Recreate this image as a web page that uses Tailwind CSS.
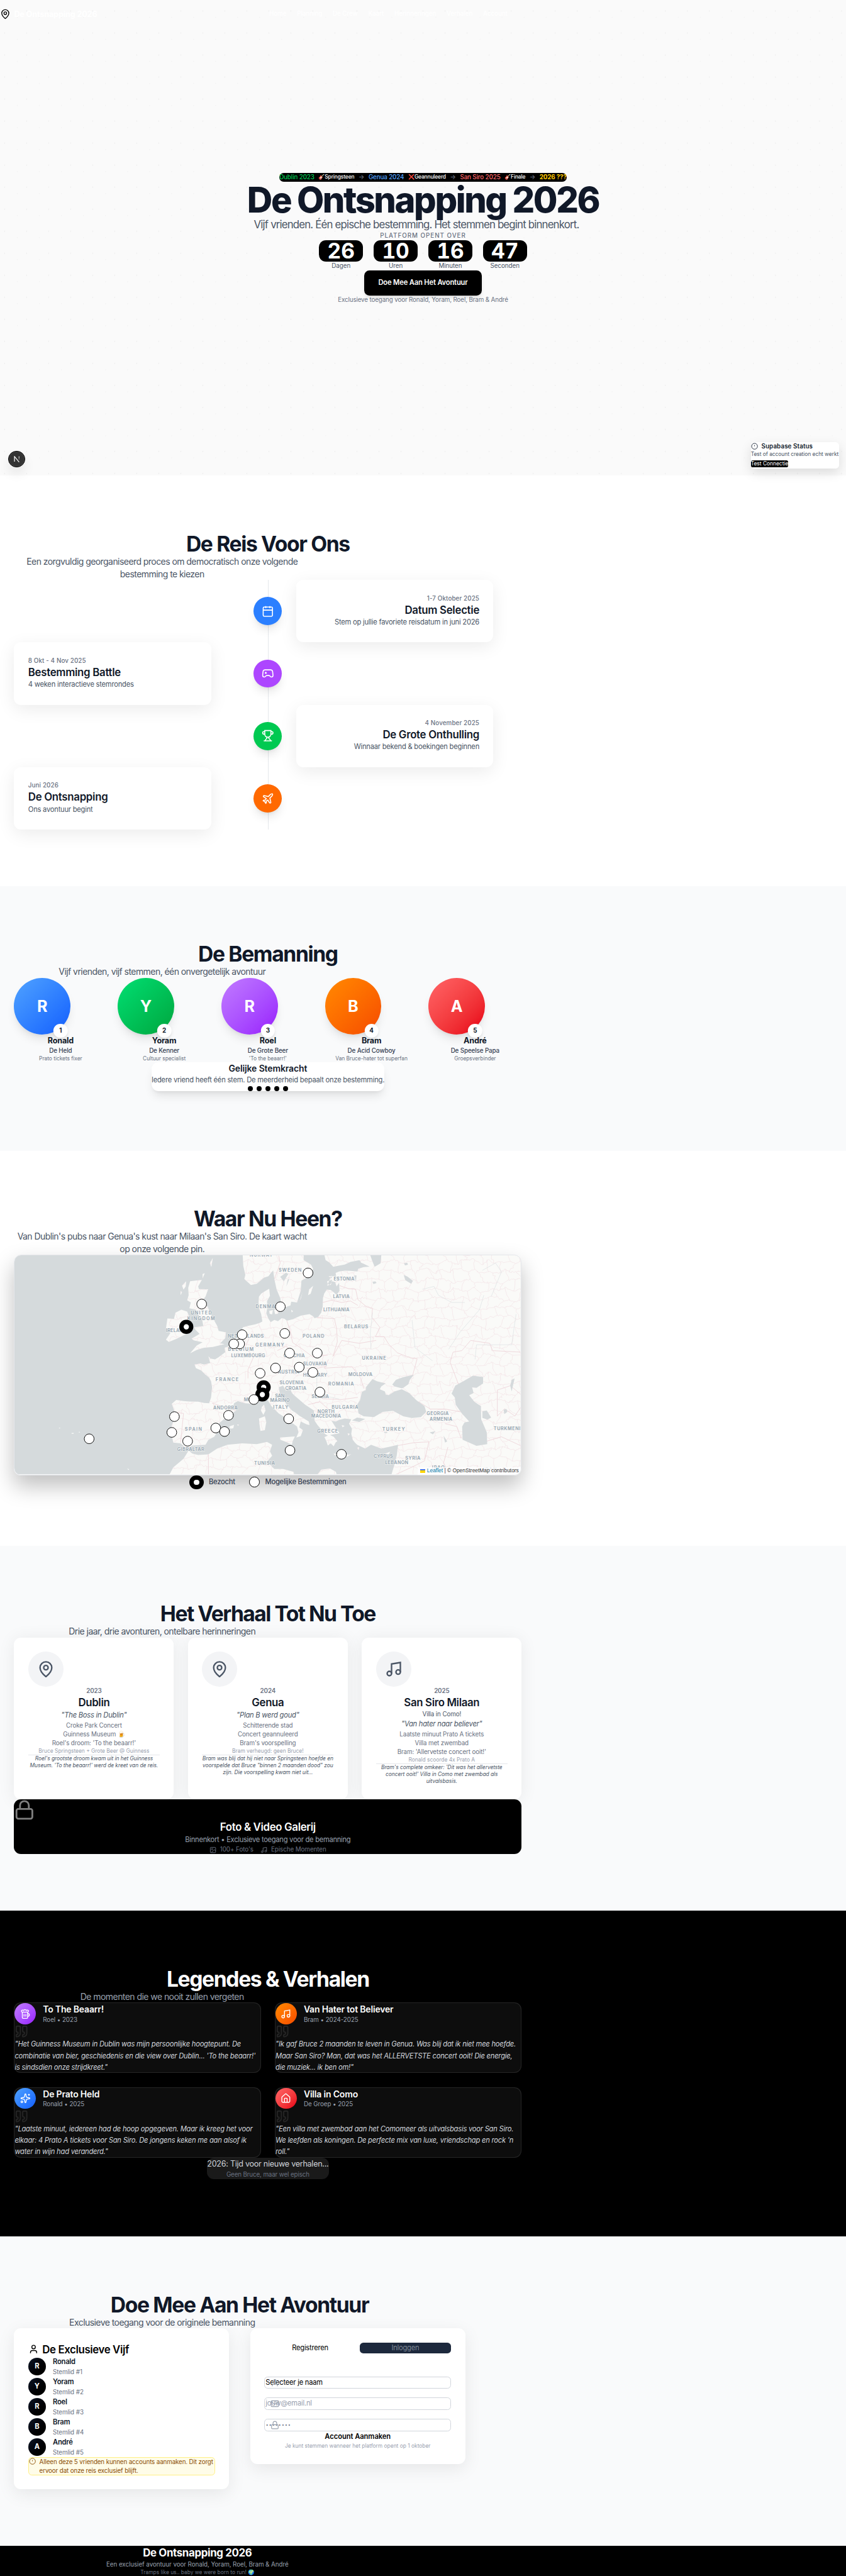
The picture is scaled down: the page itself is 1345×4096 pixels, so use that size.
<!DOCTYPE html>
<html lang="nl" class="text-[11.207px]">
<head>
<meta charset="utf-8">
<title>De Ontsnapping 2026</title>
<script src="https://cdn.jsdelivr.net/npm/@tailwindcss/browser@4"></script>
</head>
<body class="overflow-x-hidden bg-white font-[Inter,sans-serif] text-base leading-[1.6] tracking-[-0.021em] text-gray-900 antialiased">
<svg class="hidden">
  <defs>
    <symbol id="pin" viewBox="0 0 24 24"><path d="M20 10c0 4.993-5.539 10.193-7.399 11.799a1 1 0 0 1-1.202 0C9.539 20.193 4 14.993 4 10a8 8 0 0 1 16 0"/><circle cx="12" cy="10" r="3"/></symbol>
    <symbol id="music" viewBox="0 0 24 24"><path d="M9 18V5l12-2v13"/><circle cx="6" cy="18" r="3"/><circle cx="18" cy="16" r="3"/></symbol>
    <symbol id="alert" viewBox="0 0 24 24"><circle cx="12" cy="12" r="10"/><path d="M12 8v4M12 16h.01"/></symbol>
    <symbol id="lock" viewBox="0 0 24 24"><rect width="18" height="11" x="3" y="11" rx="2"/><path d="M7 11V7a5 5 0 0 1 10 0v4"/></symbol>
    <symbol id="user" viewBox="0 0 24 24"><path d="M19 21v-2a4 4 0 0 0-4-4H9a4 4 0 0 0-4 4v2"/><circle cx="12" cy="7" r="4"/></symbol>
    <symbol id="quote" viewBox="0 0 24 24"><path d="M16 3a2 2 0 0 0-2 2v6a2 2 0 0 0 2 2 1 1 0 0 1 1 1v1a2 2 0 0 1-2 2 1 1 0 0 0-1 1v2a1 1 0 0 0 1 1 6 6 0 0 0 6-6V5a2 2 0 0 0-2-2zM5 3a2 2 0 0 0-2 2v6a2 2 0 0 0 2 2 1 1 0 0 1 1 1v1a2 2 0 0 1-2 2 1 1 0 0 0-1 1v2a1 1 0 0 0 1 1 6 6 0 0 0 6-6V5a2 2 0 0 0-2-2z"/></symbol>
  </defs>
</svg>

<!-- Hero -->
<section class="relative h-270 bg-[#fafafa] bg-[radial-gradient(circle_at_20%_50%,#ebebeb_0.0625rem,transparent_0.0625rem),radial-gradient(circle_at_80%_80%,#ebebeb_0.0625rem,transparent_0.0625rem)] bg-size-[3.125rem_3.125rem]">
  <nav class="absolute inset-x-0 top-0 flex h-16 w-288 items-center justify-between text-white">
    <div class="flex items-center gap-2"><svg class="size-6 fill-none stroke-black stroke-2"><use href="#pin"/></svg><span class="text-lg font-bold tracking-[-0.01em]">De Ontsnapping 2026</span></div>
    <div class="flex gap-6 text-sm font-medium tracking-[-0.006em]"><span>Home</span><span>Planning</span><span>De Crew</span><span>Kaart</span><span>Herinneringen</span><span>Verhalen</span><span>Account</span></div>
  </nav>
  <div class="flex flex-col items-center pt-98">
    <div class="mb-0.5 flex h-5 w-163 items-center justify-between rounded-full bg-black text-sm font-medium tracking-[-0.013em] whitespace-nowrap text-white">
      <span class="text-green-500">Dublin 2023</span><span class="text-xs">🎸Springsteen</span><span class="text-gray-500">→</span>
      <span class="text-blue-400">Genua 2024</span><span class="text-xs">❌Geannuleerd</span><span class="text-gray-500">→</span>
      <span class="text-red-400">San Siro 2025</span><span class="text-xs">🎸Finale</span><span class="text-gray-500">→</span>
      <span class="font-bold text-yellow-400">2026 ???</span>
    </div>
    <h1 class="text-[5rem] leading-none font-extrabold tracking-[-0.043em] whitespace-nowrap">De Ontsnapping 2026</h1>
    <p class="-ml-7.5 text-2xl tracking-[-0.049em] text-gray-600">Vijf vrienden. Één epische bestemming. Het stemmen begint binnenkort.</p>
    <p class="text-sm font-medium tracking-[0.1em] text-gray-500">PLATFORM OPENT OVER</p>
    <div class="flex gap-6 text-center text-sm tracking-[-0.006em] text-gray-600">
      <div class="w-25"><div class="rounded-2xl bg-black text-5xl leading-none font-bold text-white tabular-nums">26</div><span>Dagen</span></div>
      <div class="w-25"><div class="rounded-2xl bg-black text-5xl leading-none font-bold text-white tabular-nums">10</div><span>Uren</span></div>
      <div class="w-25"><div class="rounded-2xl bg-black text-5xl leading-none font-bold text-white tabular-nums">16</div><span>Minuten</span></div>
      <div class="w-25"><div class="rounded-2xl bg-black text-5xl leading-none font-bold text-white tabular-nums">47</div><span>Seconden</span></div>
    </div>
    <button class="w-67 rounded-xl bg-black py-4 font-semibold tracking-[-0.015em] text-white shadow-md"><span>Doe Mee Aan Het Avontuur</span></button>
    <p class="text-sm tracking-[-0.013em] text-gray-500">Exclusieve toegang voor Ronald, Yoram, Roel, Bram &amp; André</p>
  </div>
  <div class="absolute bottom-4.75 left-4.75 z-10 grid size-9.5 place-items-center rounded-full border border-black bg-[#333] text-white shadow-[0_0.9rem_1.6rem_rgba(0,0,0,.08)] ring-1 ring-white/10 ring-inset">
    <svg class="size-3.5 fill-none" viewBox="0 0 14 14"><defs><linearGradient id="nf" x1="0" x2="0" y1="0" y2="1"><stop stop-color="#fff"/><stop offset="1" stop-color="#fff" stop-opacity="0"/></linearGradient></defs><path d="M1.500 13V1.200L12 14" stroke="#fff" stroke-width="1.700"/><rect x="11" y="1" width="1.700" height="9" fill="url(#nf)"/></svg>
  </div>
  <div class="absolute right-4 bottom-4 w-50 rounded-lg bg-white tracking-normal whitespace-nowrap shadow-[0_0.6rem_1.6rem_rgba(0,0,0,.12)]">
    <div class="flex items-center gap-2"><svg class="size-4 fill-none stroke-gray-800 stroke-2"><use href="#alert"/></svg><span class="text-sm font-semibold tracking-[0.01em]">Supabase Status</span></div>
    <p class="text-xs tracking-[-0.004em] text-gray-600">Test of account creation echt werkt</p>
    <div class="flex h-6.25 items-center"><button class="mt-0.5 rounded bg-black text-xs text-white">Test Connectie</button></div>
  </div>
</section>

<!-- Planning -->
<section class="h-[58.2rem] w-304 px-8 pt-32">
  <h2 class="text-center text-5xl leading-[1.1] font-bold tracking-[-0.04em]">De Reis Voor Ons</h2>
  <p class="w-168 text-center text-xl tracking-[-0.04em] whitespace-nowrap text-gray-600">Een zorgvuldig georganiseerd proces om democratisch onze volgende<br>bestemming te kiezen</p>
  <div class="relative">
    <div class="absolute inset-y-0 left-1/2 w-px bg-gray-200"></div>
    <div class="grid h-[8.85rem] grid-cols-[28rem_12rem_28rem] items-center">
      <div></div><div class="relative mr-8 grid size-16 place-items-center justify-self-end rounded-full bg-blue-500 shadow-lg"><svg class="size-7 fill-none stroke-white stroke-2" viewBox="0 0 24 24"><path d="M8 2v4M16 2v4M3 10h18"/><rect width="18" height="18" x="3" y="4" rx="2"/></svg></div>
      <div class="h-full rounded-2xl bg-white p-8 text-right shadow-[0_0.625rem_2.5rem_rgba(0,0,0,.08)]"><p class="text-sm font-medium tracking-[0.012em] text-gray-500">1-7 Oktober 2025</p><h3 class="text-2xl font-semibold tracking-[-0.017em]">Datum Selectie</h3><p class="text-gray-600">Stem op jullie favoriete reisdatum in juni 2026</p></div>
    </div>
    <div class="grid h-[8.85rem] grid-cols-[28rem_12rem_28rem] items-center">
      <div class="h-full rounded-2xl bg-white p-8 shadow-[0_0.625rem_2.5rem_rgba(0,0,0,.08)]"><p class="text-sm font-medium tracking-[0.012em] text-gray-500">8 Okt - 4 Nov 2025</p><h3 class="text-2xl font-semibold tracking-[-0.017em]">Bestemming Battle</h3><p class="text-gray-600">4 weken interactieve stemrondes</p></div>
      <div class="relative mr-8 grid size-16 place-items-center justify-self-end rounded-full bg-purple-500 shadow-lg"><svg class="size-7 fill-none stroke-white stroke-2" viewBox="0 0 24 24"><path d="M6 11h4M8 9v4M15 12h.01M18 10h.01"/><path d="M17.32 5H6.68a4 4 0 0 0-3.978 3.59c-.006.052-.01.101-.017.152C2.604 9.416 2 14.456 2 16a3 3 0 0 0 3 3c1 0 1.5-.5 2-1l1.414-1.414A2 2 0 0 1 9.828 16h4.344a2 2 0 0 1 1.414.586L17 18c.5.5 1 1 2 1a3 3 0 0 0 3-3c0-1.545-.604-6.584-.685-7.258-.007-.05-.011-.1-.017-.151A4 4 0 0 0 17.32 5z"/></svg></div>
    </div>
    <div class="grid h-[8.85rem] grid-cols-[28rem_12rem_28rem] items-center">
      <div></div><div class="relative mr-8 grid size-16 place-items-center justify-self-end rounded-full bg-green-500 shadow-lg"><svg class="size-7 fill-none stroke-white stroke-2" viewBox="0 0 24 24"><path d="M6 9H4.5a2.5 2.5 0 0 1 0-5H6M18 9h1.5a2.5 2.5 0 0 0 0-5H18M4 22h16M10 14.66V17c0 .55-.47.98-.97 1.21C7.85 18.75 7 20.24 7 22M14 14.66V17c0 .55.47.98.97 1.21C16.15 18.75 17 20.24 17 22M18 2H6v7a6 6 0 0 0 12 0V2Z"/></svg></div>
      <div class="h-full rounded-2xl bg-white p-8 text-right shadow-[0_0.625rem_2.5rem_rgba(0,0,0,.08)]"><p class="text-sm font-medium tracking-[0.012em] text-gray-500">4 November 2025</p><h3 class="text-2xl font-semibold tracking-[-0.017em]">De Grote Onthulling</h3><p class="text-gray-600">Winnaar bekend &amp; boekingen beginnen</p></div>
    </div>
    <div class="grid h-[8.85rem] grid-cols-[28rem_12rem_28rem] items-center">
      <div class="h-full rounded-2xl bg-white p-8 shadow-[0_0.625rem_2.5rem_rgba(0,0,0,.08)]"><p class="text-sm font-medium tracking-[0.012em] text-gray-500">Juni 2026</p><h3 class="text-2xl font-semibold tracking-[-0.017em]">De Ontsnapping</h3><p class="text-gray-600">Ons avontuur begint</p></div>
      <div class="relative mr-8 grid size-16 place-items-center justify-self-end rounded-full bg-orange-500 shadow-lg"><svg class="size-7 fill-none stroke-white stroke-2" viewBox="0 0 24 24"><path d="M17.8 19.2 16 11l3.5-3.5C21 6 21.5 4 21 3c-1-.5-3 0-4.5 1.5L13 8 4.8 6.2c-.5-.1-.9.1-1.1.5l-.3.5c-.2.5-.1 1 .3 1.3L9 12l-2 3H4l-1 1 3 2 2 3 1-1v-3l3-2 3.5 5.3c.3.4.8.5 1.3.3l.5-.2c.4-.3.6-.7.5-1.2z"/></svg></div>
    </div>
  </div>
</section>

<!-- De Crew -->
<section class="h-[37.55rem] bg-gray-50">
  <div class="w-304 px-8 pt-32">
    <h2 class="text-center text-5xl leading-[1.1] font-bold tracking-[-0.04em]">De Bemanning</h2>
    <p class="w-168 text-center text-xl tracking-[-0.04em] text-gray-600">Vijf vrienden, vijf stemmen, één onvergetelijk avontuur</p>
    <div class="grid grid-cols-5 gap-6 text-center text-xs tracking-[-0.004em] text-gray-500">
      <div class="relative"><div class="grid size-32 place-items-center rounded-full bg-linear-to-br from-blue-400 to-blue-600 text-4xl font-bold text-white shadow-lg">R</div><b class="absolute top-26 left-1/2 grid size-8 -translate-x-1/2 place-items-center rounded-full bg-white text-sm font-bold text-gray-900 shadow-md">1</b><h3 class="relative text-lg font-bold tracking-[-0.013em] text-gray-900">Ronald</h3><p class="text-sm font-medium tracking-[-0.011em] text-gray-700">De Held</p><p>Prato tickets fixer</p></div>
      <div class="relative"><div class="grid size-32 place-items-center rounded-full bg-linear-to-br from-green-400 to-green-600 text-4xl font-bold text-white shadow-lg">Y</div><b class="absolute top-26 left-1/2 grid size-8 -translate-x-1/2 place-items-center rounded-full bg-white text-sm font-bold text-gray-900 shadow-md">2</b><h3 class="relative text-lg font-bold tracking-[-0.013em] text-gray-900">Yoram</h3><p class="text-sm font-medium tracking-[-0.011em] text-gray-700">De Kenner</p><p>Cultuur specialist</p></div>
      <div class="relative"><div class="grid size-32 place-items-center rounded-full bg-linear-to-br from-purple-400 to-purple-600 text-4xl font-bold text-white shadow-lg">R</div><b class="absolute top-26 left-1/2 grid size-8 -translate-x-1/2 place-items-center rounded-full bg-white text-sm font-bold text-gray-900 shadow-md">3</b><h3 class="relative text-lg font-bold tracking-[-0.013em] text-gray-900">Roel</h3><p class="text-sm font-medium tracking-[-0.011em] text-gray-700">De Grote Beer</p><p>'To the beaarr!'</p></div>
      <div class="relative"><div class="grid size-32 place-items-center rounded-full bg-linear-to-br from-orange-400 to-orange-600 text-4xl font-bold text-white shadow-lg">B</div><b class="absolute top-26 left-1/2 grid size-8 -translate-x-1/2 place-items-center rounded-full bg-white text-sm font-bold text-gray-900 shadow-md">4</b><h3 class="relative text-lg font-bold tracking-[-0.013em] text-gray-900">Bram</h3><p class="text-sm font-medium tracking-[-0.011em] text-gray-700">De Acid Cowboy</p><p>Van Bruce-hater tot superfan</p></div>
      <div class="relative"><div class="grid size-32 place-items-center rounded-full bg-linear-to-br from-red-400 to-red-600 text-4xl font-bold text-white shadow-lg">A</div><b class="absolute top-26 left-1/2 grid size-8 -translate-x-1/2 place-items-center rounded-full bg-white text-sm font-bold text-gray-900 shadow-md">5</b><h3 class="relative text-lg font-bold tracking-[-0.013em] text-gray-900">André</h3><p class="text-sm font-medium tracking-[-0.011em] text-gray-700">De Speelse Papa</p><p>Groepsverbinder</p></div>
    </div>
    <div class="mx-auto w-132 rounded-2xl bg-white text-center shadow-lg">
      <h3 class="text-xl font-semibold tracking-[-0.009em]">Gelijke Stemkracht</h3>
      <p class="whitespace-nowrap text-gray-600">Iedere vriend heeft één stem. De meerderheid bepaalt onze bestemming.</p>
      <div class="flex justify-center gap-2"><i class="size-3 rounded-full bg-black"></i><i class="size-3 rounded-full bg-black"></i><i class="size-3 rounded-full bg-black"></i><i class="size-3 rounded-full bg-black"></i><i class="size-3 rounded-full bg-black"></i></div>
    </div>
  </div>
</section>

<!-- Kaart -->
<section class="h-[56.05rem] w-304 px-8 pt-32">
  <h2 class="text-center text-5xl leading-[1.1] font-bold tracking-[-0.04em]">Waar Nu Heen?</h2>
  <p class="w-168 text-center text-xl tracking-[-0.04em] whitespace-nowrap text-gray-600">Van Dublin's pubs naar Genua's kust naar Milaan's San Siro. De kaart wacht<br>op onze volgende pin.</p>
  <div class="relative h-125 overflow-hidden rounded-2xl border border-gray-200 shadow-[0_1.5rem_3rem_rgba(0,0,0,.25)]">
    <svg class="block size-full" viewBox="-954 27 3456 1500" preserveAspectRatio="none">
      <defs><path id="land" d="M1162 27 1170 60 1195 75 1222 106 1260 98 1300 90 1340 72 1402 60 1412 78 1430 85 1470 105 1430 108 1392 120 1388 138 1340 134 1300 132 1262 138 1238 148 1242 168 1205 172 1195 200 1180 235 1200 228 1215 205 1235 210 1245 240 1262 215 1265 270 1245 298 1225 280 1205 265 1178 262 1160 290 1152 320 1150 380 1140 420 1118 450 1095 458 1085 445 1060 430 1000 440 945 465 905 475 890 462 870 458 845 478 820 470 795 485 780 462 765 425 772 385 770 340 790 305 785 256 760 270 730 290 715 310 712 350 716 390 730 430 738 480 720 490 690 500 640 510 605 520 590 560 575 580 545 620 510 650 480 660 485 690 440 725 415 740 385 735 370 718 382 765 340 775 315 768 275 775 285 800 320 815 345 840 375 865 388 890 395 930 388 1000 375 1040 340 1038 300 1030 240 1028 200 1025 150 1018 120 1045 140 1100 135 1150 118 1200 115 1240 130 1310 180 1315 215 1345 235 1345 260 1330 350 1325 370 1290 410 1270 430 1235 415 1220 445 1175 500 1130 560 1090 540 1060 545 1040 570 1025 620 1040 680 1045 720 1010 760 995 800 1060 850 1110 880 1130 920 1160 975 1200 985 1240 970 1275 1000 1265 1015 1225 990 1205 1000 1165 1040 1185 1060 1190 1055 1165 990 1125 965 1105 940 1090 905 1050 860 990 850 930 880 920 900 955 925 932 940 970 960 990 1030 1050 1090 1090 1095 1160 1115 1190 1145 1225 1165 1250 1185 1262 1162 1272 1175 1300 1185 1330 1205 1315 1225 1335 1238 1310 1250 1300 1225 1270 1200 1258 1265 1245 1235 1200 1210 1160 1240 1165 1262 1155 1300 1145 1345 1150 1330 1180 1350 1215 1345 1250 1355 1290 1370 1310 1385 1325 1440 1350 1480 1325 1550 1350 1620 1335 1665 1325 1655 1400 1640 1460 1620 1527H2502V27ZM604 27 608 100 622 160 615 190 660 230 700 222 750 180 780 170 795 150 812 130 820 190 835 260 860 320 865 345 890 385 930 370 935 345 975 350 1000 270 1005 200 1060 170 1085 120 1070 90 1020 60V27ZM105 1527 130 1480 200 1420 235 1365 260 1385 300 1395 370 1390 430 1350 500 1325 600 1315 700 1320 770 1305 805 1325 790 1370 805 1400 770 1440 820 1490 880 1490 950 1510 955 1527ZM1115 1527 1140 1495 1200 1487 1240 1510 1245 1527ZM245 205 325 195 300 240 305 258 368 260 350 310 325 340 365 380 385 430 430 510 440 545 490 555 485 595 450 630 480 635 400 655 340 660 290 675 245 698 290 645 330 622 270 610 255 598 310 565 280 535 272 520 335 512 325 455 300 435 285 400 240 390 250 350 225 335 235 300 232 250ZM185 400 225 412 240 450 235 500 220 565 150 600 100 620 80 605 110 560 80 530 90 460 135 462 145 420ZM218 205 190 235 200 262 215 240ZM400 45 380 80 390 108ZM330 155 345 150 330 185ZM180 270 190 280 180 300ZM818 400 852 395 845 428 825 430ZM785 408 810 402 805 432 788 428ZM935 400 948 410 938 418ZM1085 236 1058 260 1050 300 1068 290ZM1012 280 992 342 1002 320ZM1190 170 1215 168 1210 185ZM1180 205 1215 195 1205 230 1185 225ZM750 1050 760 1090 745 1120 728 1090 735 1065ZM715 1145 755 1130 765 1170 755 1225 725 1230 718 1180ZM860 1275 960 1268 945 1300 940 1325 900 1305 860 1290ZM1225 1385 1330 1392 1345 1388 1320 1405 1230 1395ZM1550 1395 1612 1372 1590 1402 1565 1408ZM512 1200 545 1188 540 1212 520 1215ZM565 1186 580 1188 572 1194ZM1280 1190 1300 1195 1285 1205ZM1320 1245 1335 1250 1325 1262ZM1385 1345 1400 1340 1395 1360ZM-650 1208h8v5h-8ZM-564 1244h14v5h-14ZM-515 1236h8v5h-8ZM-185 1488l14 4-4 6Z"/><clipPath id="onland"><use href="#land"/></clipPath></defs>
      <path fill="#d5dadc" d="M-954 27h3456v1500H-954z"/>
      <use href="#land" fill="#fafaf8"/>
      <g clip-path="url(#onland)" fill="none">
        <path id="mesh" stroke="#f3e4e6" stroke-width="3"/>
        <g stroke="#eed6da" stroke-width="4"><path d="M1265 235l60 20 50 5 15 70 60 50 40 10-5 60 55 70-30 65 60 0 30 50 60 60 90 35 45 5-30 110-55 30M1150 350l60-15 70 15 60-10 50 30M1110 455l120 5 15 70 5 90-30 100 60-110 120 20 115-20M905 475l20 60 20 90 60 40 80 60 100-15M840 680l60-30 60 50M650 590l-30 70 60 60-40 90 0 60M1190 740l-30 60 80-5 110-5 60 80 20 70M1040 800l60 5 80-20M1100 960l50 50 130 5 110-15M1050 1050l80-20 60 50M395 1040l100 30 60 20M130 1100l70 10-10 100-10 100M820 190l40-110-10-50M1805 1030l80 50 100 0 110 20M1985 1180l80 20 30 80M1665 1330l110-20 100-5-30 130-80 40-130 60M2080 920l-60-160 20-70 60-10 60-70 130 20 20 50 190 10M2342 1128V950l90-30 70 60M2342 1128l50-50 70 50 40-60M2270 1300l100-30 130 60M2005 1340l-30 110 40 80M370 1390v137"/></g>
        <path stroke="#dde2e4" stroke-width="3" d="M1490 420l-15 140 5 110M1760 470l20 190 120 90M1830 260l80-20 30 60 90 50 90 0M2250 300l-30 100-130 150-80 120M2240 130l90-50 40 60-70 170M2190 740l10-100 240 0 30-210M1110 850v130l150 30M940 1400l90 60"/>
        <g fill="#d5dadc"><path d="M1490 875 1445 930 1445 950 1418 962 1405 1020 1385 1050 1395 1110 1430 1130 1500 1135 1560 1100 1630 1092 1700 1130 1760 1142 1820 1135 1857 1100 1845 1060 1790 1020 1740 970 1690 945 1640 960 1600 985 1580 980 1575 960 1540 945 1550 925 1580 905 1520 890ZM1625 912 1650 880 1700 862 1772 845 1745 880 1735 910 1700 935 1690 938 1640 925ZM1350 1158 1385 1138 1440 1148 1400 1168ZM2175 852 2245 860 2245 905 2200 935 2170 932 2180 970 2150 985 2185 1030 2230 1060 2232 1150 2258 1210 2270 1240 2273 1320 2200 1332 2105 1290 2102 1200 2118 1172 2150 1165 2100 1110 2058 1050 2052 1000 2030 975 2055 920 2110 890ZM2240 1095 2270 1090 2300 1138 2275 1152 2240 1140ZM2385 1085l20-5 5 20-20 15ZM1475 27H1550L1545 82 1505 106 1490 70ZM1705 82l22-4 5 14-20 4ZM1703 162l25 10 38 30-12 20-40-25ZM1365 165l16 0-4 45ZM1490 208l20-2 8 10-22 8ZM860 175l40-30 15 10-30 50ZM912 190l10 0-20 50ZM1880 1240l40-8-18 22ZM1975 1262l25 40-15 8ZM1570 1236h20v8h-20ZM2430 920l10-40 20-10-20 90Z"/></g>
      </g>
      <g class="font-[Inter,sans-serif] tracking-normal" font-weight="600" fill="#93a3af" stroke="#fafaf8" stroke-width="4" paint-order="stroke" font-size="31" text-anchor="middle">
        <text x="730" y="34" textLength="156">NORWAY</text><text x="927" y="137" textLength="156">SWEDEN</text><text x="1296" y="198" textLength="142">ESTONIA</text><text x="1277" y="318" textLength="112">LATVIA</text><text x="1243" y="410" textLength="178">LITHUANIA</text>
        <text x="321" y="431" textLength="144">UNITED</text><text x="320" y="469" textLength="188">KINGDOM</text><text x="150" y="554" textLength="138">IRELAND</text><text x="784" y="390" textLength="182">DENMARK</text><text x="1378" y="525" textLength="164">BELARUS</text>
        <text x="625" y="591" textLength="244">NETHERLANDS</text><text x="789" y="652" textLength="196">GERMANY</text><text x="591" y="680" textLength="174">BELGIUM</text><text x="1086" y="593" textLength="148">POLAND</text><text x="641" y="723" textLength="232">LUXEMBOURG</text><text x="955" y="727" textLength="144">CZECHIA</text>
        <text x="1500" y="740" textLength="163">UKRAINE</text><text x="1097" y="779" textLength="162">SLOVAKIA</text><text x="917" y="839" textLength="146">AUSTRIA</text><text x="1098" y="859" textLength="164">HUNGARY</text><text x="1407" y="853" textLength="164">MOLDOVA</text><text x="497" y="889" textLength="156">FRANCE</text>
        <text x="938" y="911" textLength="164">SLOVENIA</text><text x="966" y="948" textLength="144">CROATIA</text><text x="1275" y="919" textLength="174">ROMANIA</text><text x="857" y="1001" textLength="64">SAN</text><text x="858" y="1031" textLength="134">MARINO</text><text x="1133" y="1006" textLength="118">SERBIA</text><text x="682" y="1026" textLength="140">MONACO</text>
        <text x="864" y="1077" textLength="104">ITALY</text><text x="1302" y="1080" textLength="182">BULGARIA</text><text x="1173" y="1109" textLength="116">NORTH</text><text x="1173" y="1140" textLength="203">MACEDONIA</text><text x="486" y="1082" textLength="166">ANDORRA</text><text x="267" y="1229" textLength="116">SPAIN</text><text x="1183" y="1243" textLength="142">GREECE</text>
        <text x="249" y="1365" textLength="184">GIBRALTAR</text><text x="753" y="1461" textLength="142">TUNISIA</text><text x="1634" y="1229" textLength="154">TURKEY</text><text x="1935" y="1122" textLength="150">GEORGIA</text><text x="1957" y="1162" textLength="154">ARMENIA</text><text x="1563" y="1414" textLength="130">CYPRUS</text><text x="1765" y="1428" textLength="104">SYRIA</text><text x="1655" y="1459" textLength="158">LEBANON</text><text x="1939" y="1492" textLength="86">IRAQ</text><text x="2291" y="1505" textLength="92">IRAN</text><text x="2455" y="1226" textLength="276">TURKMENISTAN</text>
      </g>
      <g fill="#fff" stroke="#000" stroke-width="4">
        <circle cx="1050" cy="148" r="33.500"/><circle cx="324" cy="361" r="33.500"/><circle cx="861" cy="379" r="33.500"/><circle cx="600" cy="571" r="33.500"/><circle cx="583" cy="634" r="33.500"/><circle cx="543" cy="634" r="33.500"/><circle cx="891" cy="562" r="33.500"/><circle cx="924" cy="697" r="33.500"/><circle cx="1113" cy="697" r="33.500"/><circle cx="990" cy="793" r="33.500"/><circle cx="828" cy="799" r="33.500"/><circle cx="1083" cy="829" r="33.500"/><circle cx="723" cy="835" r="33.500"/><circle cx="1131" cy="964" r="33.500"/><circle cx="138" cy="1132" r="33.500"/><circle cx="507" cy="1123" r="33.500"/><circle cx="420" cy="1210" r="33.500"/><circle cx="480" cy="1234" r="33.500"/><circle cx="120" cy="1240" r="33.500"/><circle cx="228" cy="1300" r="33.500"/><circle cx="918" cy="1147" r="33.500"/><circle cx="927" cy="1363" r="33.500"/><circle cx="1278" cy="1390" r="33.500"/><circle cx="-444" cy="1284" r="33.500"/>
        <g stroke-width="30"><circle cx="219" cy="517" r="33"/><circle cx="747" cy="931" r="33"/><circle cx="738" cy="981" r="33"/></g>
        <circle cx="680" cy="1015" r="33.500"/>
      </g>
    </svg>
    <div class="absolute right-0 bottom-0 flex items-center gap-1 bg-white/80 px-1.25 font-['Liberation_Sans',sans-serif] text-xs tracking-normal whitespace-nowrap text-[#333]"><span class="h-2 w-3 border-b-4 border-[#ffd500] bg-[#4c7be1]"></span><span><span class="text-[#0078a8]">Leaflet</span> | © OpenStreetMap contributors</span></div>
  </div>
  <div class="relative flex h-8 items-center justify-center gap-3 font-medium text-gray-700"><i class="size-8 rounded-full border-[0.625rem] border-black bg-white"></i><span class="mr-5">Bezocht</span><i class="size-6 rounded-full border-[0.09rem] border-black bg-white"></i><span>Mogelijke Bestemmingen</span></div>
</section>

<!-- Herinneringen -->
<section class="h-[51.8rem] bg-gray-50">
  <div class="w-304 px-8 pt-32">
    <h2 class="text-center text-5xl leading-[1.1] font-bold tracking-[-0.045em]">Het Verhaal Tot Nu Toe</h2>
    <p class="w-168 text-center text-xl tracking-[-0.04em] text-gray-600">Drie jaar, drie avonturen, ontelbare herinneringen</p>
    <div class="grid h-[22.9rem] grid-cols-3 gap-8 text-center text-sm tracking-[-0.013em] whitespace-nowrap text-gray-500">
      <div class="rounded-2xl bg-white p-8 shadow-[0_0.25rem_2.5rem_rgba(0,0,0,.07)]"><div class="grid size-20 place-items-center rounded-full bg-gray-100"><svg class="size-10 fill-none stroke-gray-600 stroke-2"><use href="#pin"/></svg></div><p class="font-semibold">2023</p><h3 class="text-2xl font-semibold tracking-[-0.02em] text-gray-900">Dublin</h3><p class="text-base leading-[1.6] tracking-[-0.021em] text-gray-600 italic">"The Boss in Dublin"</p><p>Croke Park Concert</p><p>Guinness Museum 🍺</p><p>Roel's droom: 'To the beaarr!'</p><p class="text-xs tracking-normal text-gray-400">Bruce Springsteen + Grote Beer @ Guinness</p><p class="border-t border-gray-200 text-xs tracking-[-0.004em] text-gray-600 italic">Roel's grootste droom kwam uit in het Guinness<br>Museum. 'To the beaarr!' werd de kreet van de reis.</p></div>
      <div class="rounded-2xl bg-white p-8 shadow-[0_0.25rem_2.5rem_rgba(0,0,0,.07)]"><div class="grid size-20 place-items-center rounded-full bg-gray-100"><svg class="size-10 fill-none stroke-gray-600 stroke-2"><use href="#pin"/></svg></div><p class="font-semibold">2024</p><h3 class="text-2xl font-semibold tracking-[-0.02em] text-gray-900">Genua</h3><p class="text-base leading-[1.6] tracking-[-0.021em] text-gray-600 italic">"Plan B werd goud"</p><p>Schitterende stad</p><p>Concert geannuleerd</p><p>Bram's voorspelling</p><p class="text-xs tracking-normal text-gray-400">Bram verheugd: geen Bruce!</p><p class="border-t border-gray-200 text-xs tracking-[-0.004em] text-gray-600 italic">Bram was blij dat hij niet naar Springsteen hoefde en<br>voorspelde dat Bruce "binnen 2 maanden dood" zou<br>zijn. Die voorspelling kwam niet uit...</p></div>
      <div class="rounded-2xl bg-white p-8 shadow-[0_0.25rem_2.5rem_rgba(0,0,0,.07)]"><div class="grid size-20 place-items-center rounded-full bg-gray-100"><svg class="size-10 fill-none stroke-gray-600 stroke-2"><use href="#music"/></svg></div><p class="font-semibold">2025</p><h3 class="text-2xl font-semibold tracking-[-0.02em] text-gray-900">San Siro Milaan</h3><p class="text-gray-600">Villa in Como!</p><p class="text-base leading-[1.6] tracking-[-0.021em] text-gray-600 italic">"Van hater naar believer"</p><p>Laatste minuut Prato A tickets</p><p>Villa met zwembad</p><p>Bram: 'Allervetste concert ooit!'</p><p class="text-xs tracking-normal text-gray-400">Ronald scoorde 4x Prato A</p><p class="border-t border-gray-200 text-xs tracking-[-0.004em] text-gray-600 italic">Bram's complete omkeer: 'Dit was het allervetste<br>concert ooit!' Villa in Como met zwembad als<br>uitvalsbasis.</p></div>
    </div>
    <div class="relative rounded-2xl bg-black text-center text-white">
      <svg class="size-12 fill-none stroke-[#808080] stroke-2"><use href="#lock"/></svg>
      <h3 class="text-2xl font-semibold tracking-[-0.02em]">Foto &amp; Video Galerij</h3>
      <p class="tracking-[-0.026em] text-gray-400">Binnenkort • Exclusieve toegang voor de bemanning</p>
      <div class="flex items-center justify-center gap-2 text-sm tracking-[-0.006em] text-gray-500"><svg class="size-4 fill-none stroke-current stroke-2" viewBox="0 0 24 24"><rect width="18" height="18" x="3" y="3" rx="2"/><circle cx="9" cy="9" r="2"/><path d="m21 15-3.086-3.086a2 2 0 0 0-2.828 0L6 21"/></svg><span class="mr-2">100+ Foto's</span><svg class="size-4 fill-none stroke-current stroke-2"><use href="#music"/></svg><span>Epische Momenten</span></div>
    </div>
  </div>
</section>

<!-- Verhalen -->
<section class="h-[46.2rem] bg-black text-white">
  <div class="w-304 px-8 pt-32">
    <h2 class="text-center text-5xl leading-[1.1] font-bold tracking-[-0.04em]">Legendes &amp; Verhalen</h2>
    <p class="w-168 text-center text-xl tracking-[-0.04em] text-gray-400">De momenten die we nooit zullen vergeten</p>
    <div class="grid grid-cols-2 gap-8 whitespace-nowrap">
      <div class="h-40 rounded-2xl border border-white/10 bg-white/5"><div class="flex gap-4"><div class="grid size-12 place-items-center rounded-full bg-linear-to-br from-purple-400 to-purple-600"><svg class="size-6 fill-none stroke-white stroke-2" viewBox="0 0 24 24"><path d="M17 11h1a3 3 0 0 1 0 6h-1M9 12v6M13 12v6M14 7.500c-1 0-1.440.500-3 .500s-2-.500-3-.500-1.720.500-2.500.500a2.500 2.500 0 0 1 0-5c.780 0 1.570.500 2.500.500S9.440 2 11 2s2 1.500 3 1.500 1.720-.500 2.500-.500a2.500 2.500 0 0 1 0 5c-.780 0-1.500-.500-2.500-.500ZM5 8v12a2 2 0 0 0 2 2h8a2 2 0 0 0 2-2V8"/></svg></div><div><h3 class="text-xl font-semibold tracking-[-0.013em]">To The Beaarr!</h3><p class="text-sm tracking-[-0.006em] text-gray-400">Roel • 2023</p></div></div><svg class="size-8 fill-none stroke-white/10 stroke-2"><use href="#quote"/></svg><p class="leading-relaxed text-gray-300 italic">"Het Guinness Museum in Dublin was mijn persoonlijke hoogtepunt. De<br>combinatie van bier, geschiedenis en die view over Dublin... 'To the beaarr!'<br>is sindsdien onze strijdkreet."</p></div>
      <div class="h-40 rounded-2xl border border-white/10 bg-white/5"><div class="flex gap-4"><div class="grid size-12 place-items-center rounded-full bg-linear-to-br from-orange-400 to-orange-600"><svg class="size-6 fill-none stroke-white stroke-2"><use href="#music"/></svg></div><div><h3 class="text-xl font-semibold tracking-[-0.013em]">Van Hater tot Believer</h3><p class="text-sm tracking-[-0.006em] text-gray-400">Bram • 2024-2025</p></div></div><svg class="size-8 fill-none stroke-white/10 stroke-2"><use href="#quote"/></svg><p class="leading-relaxed text-gray-300 italic">"Ik gaf Bruce 2 maanden te leven in Genua. Was blij dat ik niet mee hoefde.<br>Maar San Siro? Man, dat was het ALLERVETSTE concert ooit! Die energie,<br>die muziek... ik ben om!"</p></div>
      <div class="h-40 rounded-2xl border border-white/10 bg-white/5"><div class="flex gap-4"><div class="grid size-12 place-items-center rounded-full bg-linear-to-br from-blue-400 to-blue-600"><svg class="size-6 fill-none stroke-white stroke-2" viewBox="0 0 24 24"><path d="M11.017 2.814a1 1 0 0 1 1.966 0l1.051 5.558a2 2 0 0 0 1.594 1.594l5.558 1.051a1 1 0 0 1 0 1.966l-5.558 1.051a2 2 0 0 0-1.594 1.594l-1.051 5.558a1 1 0 0 1-1.966 0l-1.051-5.558a2 2 0 0 0-1.594-1.594l-5.558-1.051a1 1 0 0 1 0-1.966l5.558-1.051a2 2 0 0 0 1.594-1.594zM20 2v4M22 4h-4"/><circle cx="4" cy="20" r="2"/></svg></div><div><h3 class="text-xl font-semibold tracking-[-0.013em]">De Prato Held</h3><p class="text-sm tracking-[-0.006em] text-gray-400">Ronald • 2025</p></div></div><svg class="size-8 fill-none stroke-white/10 stroke-2"><use href="#quote"/></svg><p class="leading-relaxed text-gray-300 italic">"Laatste minuut, iedereen had de hoop opgegeven. Maar ik kreeg het voor<br>elkaar: 4 Prato A tickets voor San Siro. De jongens keken me aan alsof ik<br>water in wijn had veranderd."</p></div>
      <div class="h-40 rounded-2xl border border-white/10 bg-white/5"><div class="flex gap-4"><div class="grid size-12 place-items-center rounded-full bg-linear-to-br from-red-400 to-red-600"><svg class="size-6 fill-none stroke-white stroke-2" viewBox="0 0 24 24"><path d="M15 21v-8a1 1 0 0 0-1-1h-4a1 1 0 0 0-1 1v8"/><path d="M3 10a2 2 0 0 1 .709-1.528l7-5.999a2 2 0 0 1 2.582 0l7 5.999A2 2 0 0 1 21 10v9a2 2 0 0 1-2 2H5a2 2 0 0 1-2-2z"/></svg></div><div><h3 class="text-xl font-semibold tracking-[-0.013em]">Villa in Como</h3><p class="text-sm tracking-[-0.006em] text-gray-400">De Groep • 2025</p></div></div><svg class="size-8 fill-none stroke-white/10 stroke-2"><use href="#quote"/></svg><p class="leading-relaxed text-gray-300 italic">"Een villa met zwembad aan het Comomeer als uitvalsbasis voor San Siro.<br>We leefden als koningen. De perfecte mix van luxe, vriendschap en rock 'n<br>roll."</p></div>
    </div>
    <div class="mx-auto w-69 rounded-2xl bg-[#1a1a1a] text-center whitespace-nowrap"><p class="text-lg tracking-[-0.022em] text-gray-300">2026: Tijd voor nieuwe verhalen...</p><p class="text-sm tracking-[-0.013em] text-gray-500">Geen Bruce, maar wel episch</p></div>
  </div>
</section>

<!-- Account -->
<section class="h-[43.925rem] bg-gray-50">
  <div class="w-272 px-8 pt-32">
    <h2 class="text-center text-5xl leading-[1.1] font-bold tracking-[-0.04em]">Doe Mee Aan Het Avontuur</h2>
    <p class="w-168 text-center text-xl tracking-[-0.04em] text-gray-600">Exclusieve toegang voor de originele bemanning</p>
    <div class="grid grid-cols-2 items-start gap-12">
      <div class="rounded-2xl bg-white p-8 shadow-[0_0.625rem_2.5rem_rgba(0,0,0,.08)]">
        <h3 class="flex items-center gap-2 text-2xl font-semibold tracking-[-0.022em] text-black"><svg class="size-6 fill-none stroke-current stroke-2"><use href="#user"/></svg><span>De Exclusieve Vijf</span></h3>
        <div class="flex items-center gap-4"><div class="grid size-10 place-items-center rounded-full bg-linear-to-br from-gray-900 to-black font-bold text-white">R</div><div><p class="font-semibold">Ronald</p><p class="text-sm tracking-[-0.006em] text-gray-500">Stemlid #1</p></div></div>
        <div class="flex items-center gap-4"><div class="grid size-10 place-items-center rounded-full bg-linear-to-br from-gray-900 to-black font-bold text-white">Y</div><div><p class="font-semibold">Yoram</p><p class="text-sm tracking-[-0.006em] text-gray-500">Stemlid #2</p></div></div>
        <div class="flex items-center gap-4"><div class="grid size-10 place-items-center rounded-full bg-linear-to-br from-gray-900 to-black font-bold text-white">R</div><div><p class="font-semibold">Roel</p><p class="text-sm tracking-[-0.006em] text-gray-500">Stemlid #3</p></div></div>
        <div class="flex items-center gap-4"><div class="grid size-10 place-items-center rounded-full bg-linear-to-br from-gray-900 to-black font-bold text-white">B</div><div><p class="font-semibold">Bram</p><p class="text-sm tracking-[-0.006em] text-gray-500">Stemlid #4</p></div></div>
        <div class="flex items-center gap-4"><div class="grid size-10 place-items-center rounded-full bg-linear-to-br from-gray-900 to-black font-bold text-white">A</div><div><p class="font-semibold">André</p><p class="text-sm tracking-[-0.006em] text-gray-500">Stemlid #5</p></div></div>
        <div class="flex h-10.5 gap-2 rounded-lg border border-yellow-200 bg-yellow-50 text-sm tracking-[-0.013em] whitespace-nowrap text-yellow-800"><svg class="size-4 fill-none stroke-current stroke-2"><use href="#alert"/></svg><p>Alleen deze 5 vrienden kunnen accounts aanmaken. Dit zorgt<br>ervoor dat onze reis exclusief blijft.</p></div>
      </div>
      <div class="rounded-2xl bg-white p-8 text-center text-black shadow-[0_0.625rem_2.5rem_rgba(0,0,0,.08)]">
        <div class="mb-13 grid grid-cols-2 gap-2"><span>Registreren</span><span class="rounded-lg bg-slate-800 text-[#7d8796]">Inloggen</span></div>
        <div class="relative h-6.9 rounded-lg border border-gray-300 pl-px text-left leading-[1.55]">Selecteer je naam<svg class="absolute top-1/2 left-3 size-5 -translate-y-1/2 fill-none stroke-gray-400 stroke-2"><use href="#user"/></svg></div>
        <div class="relative mt-5 h-6.9 rounded-lg border border-gray-300 pl-px text-left leading-[1.55] text-gray-400">jouw@email.nl<svg class="absolute top-1/2 left-3 size-5 -translate-y-1/2 fill-none stroke-gray-400 stroke-2" viewBox="0 0 24 24"><rect width="20" height="16" x="2" y="4" rx="2"/><path d="m22 7-8.970 5.700a1.940 1.940 0 0 1-2.060 0L2 7"/></svg></div>
        <div class="relative mt-5 h-6.9 rounded-lg border border-gray-300 pl-0.5 text-left text-[0.6rem] leading-[2.8] tracking-[0.19em] text-gray-500">••••••••<svg class="absolute top-1/2 left-3 size-5 -translate-y-1/2 fill-none stroke-gray-400 stroke-2"><use href="#lock"/></svg></div>
        <p class="font-semibold tracking-[-0.005em]">Account Aanmaken</p>
        <p class="text-xs tracking-normal text-gray-400">Je kunt stemmen wanneer het platform opent op 1 oktober</p>
      </div>
    </div>
  </div>
</section>

<footer class="h-17 bg-black text-white">
  <div class="w-224 text-center"><h3 class="text-2xl font-bold tracking-[-0.019em]">De Ontsnapping 2026</h3><p class="text-sm tracking-[-0.006em] text-gray-400">Een exclusief avontuur voor Ronald, Yoram, Roel, Bram &amp; André</p><p class="text-xs tracking-normal text-gray-500">Tramps like us.. baby we were born to run! 🌍</p></div>
</footer>

<script>
// Province borders: a wobbly honeycomb laid over the land
(() => {
  let seed = 7;
  const rnd = () => ((seed = (seed * 16807) % 2147483647) / 2147483647) - .5;
  const cols = 58, rows = 24, c = 64, pts = [];
  for (let j = 0; j <= rows; j++) for (let i = 0; i <= cols; i++)
    pts.push([90 + i * c * .68 + (j % 2) * 18 + rnd() * 36, 10 + j * c + rnd() * 40]);
  const at = (i, j) => pts[j * (cols + 1) + i];
  const seg = (a, b) => {
    let s = `M${a[0] | 0} ${a[1] | 0}`;
    for (let k = 1; k < 5; k++) s += `L${(a[0] + (b[0] - a[0]) * k / 5 + rnd() * 13) | 0} ${(a[1] + (b[1] - a[1]) * k / 5 + rnd() * 13) | 0}`;
    return s + `L${b[0] | 0} ${b[1] | 0}`;
  };
  let d = '';
  for (let j = 0; j < rows; j++) for (let i = 0; i < cols; i++) {
    if ((i + j) % 2) d += seg(at(i, j), at(i, j + 1));
    d += seg(at(i, j), at(i + 1, j));
  }
  document.getElementById('mesh').setAttribute('d', d);
})();
</script>
</body>
</html>
